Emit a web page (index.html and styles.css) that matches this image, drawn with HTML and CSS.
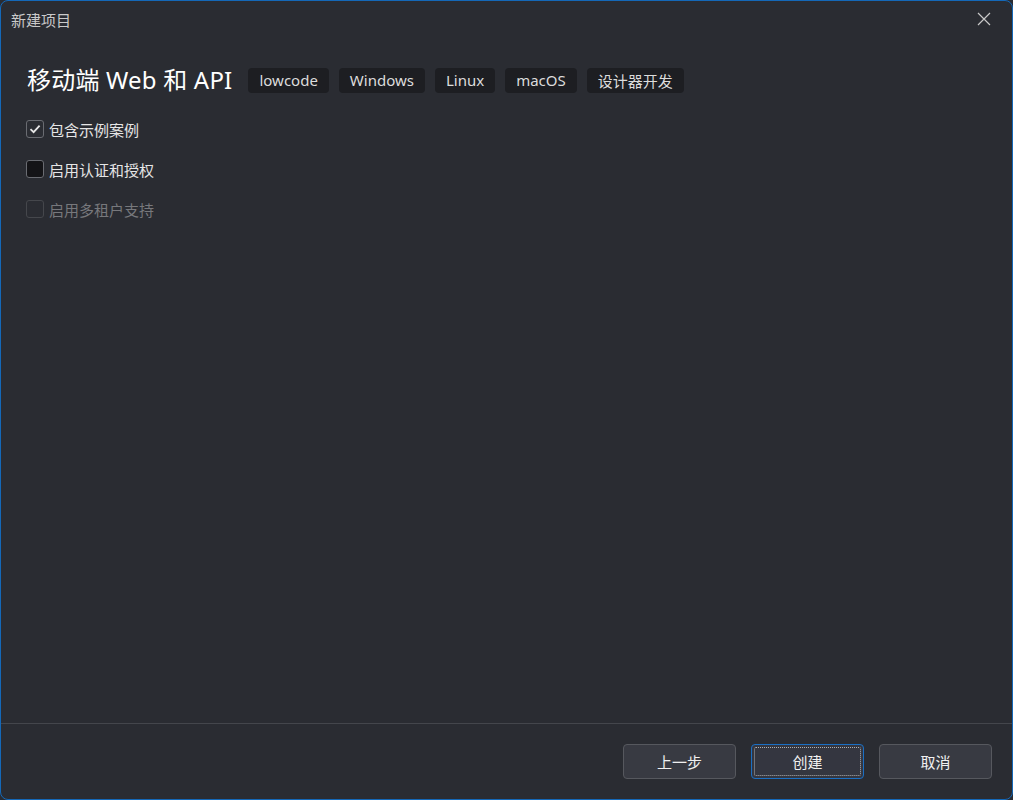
FILE: index.html
```html
<!DOCTYPE html>
<html lang="zh">
<head>
<meta charset="utf-8">
<title>新建项目</title>
<link rel="stylesheet" href="styles.css">
</head>
<body>
<div class="window">
  <div class="titlebar">
    <span class="title">新建项目</span>
    <button class="close" aria-label="关闭">
      <svg width="14" height="14" viewBox="0 0 14 14"><path d="M1 1L13 13M13 1L1 13" stroke="#c8c8c8" stroke-width="1.2" fill="none"/></svg>
    </button>
  </div>
  <div class="content">
    <div class="heading-row">
      <h1 class="heading">移动端 Web 和 API</h1>
      <div class="tags">
        <span class="tag">lowcode</span>
        <span class="tag">Windows</span>
        <span class="tag">Linux</span>
        <span class="tag">macOS</span>
        <span class="tag">设计器开发</span>
      </div>
    </div>
    <div class="options">
      <label class="option">
        <span class="box checked">
          <svg width="14" height="14" viewBox="0 0 14 14"><path d="M2.5 7.2L5.6 10.2L11.6 3.6" stroke="#e6e6e6" stroke-width="1.8" fill="none"/></svg>
        </span>
        <span>包含示例案例</span>
      </label>
      <label class="option">
        <span class="box"></span>
        <span>启用认证和授权</span>
      </label>
      <label class="option disabled">
        <span class="box"></span>
        <span>启用多租户支持</span>
      </label>
    </div>
  </div>
  <div class="footer">
    <button class="btn">上一步</button>
    <button class="btn primary"><span class="focus">创建</span></button>
    <button class="btn">取消</button>
  </div>
</div>
</body>
</html>
```
FILE: styles.css
```css
html, body {
  margin: 0;
  padding: 0;
  background: #2a2c32;
}
body {
  font-family: "Noto Sans", "Noto Sans CJK SC", sans-serif;
  color: #e8e8e8;
}
.window {
  width: 1013px;
  height: 800px;
  box-sizing: border-box;
  border: 1px solid #1468b8;
  border-radius: 8px;
  background: #2a2c32;
  display: flex;
  flex-direction: column;
  overflow: hidden;
}
.titlebar {
  height: 38px;
  display: flex;
  align-items: center;
  justify-content: space-between;
  padding-left: 10px;
  padding-right: 18px;
  flex-shrink: 0;
}
.title {
  font-family: "Noto Sans CJK SC", sans-serif;
  font-size: 15px;
  color: #c9c9c9;
  margin-top: -1px;
}
.close {
  background: none;
  border: 0;
  padding: 0;
  width: 20px;
  height: 20px;
  display: flex;
  align-items: center;
  justify-content: center;
  margin-top: -2px;
}
.content {
  flex: 1;
  padding: 20px 25px 0 25px;
}
.heading-row {
  display: flex;
  align-items: center;
  gap: 16px;
  height: 40px;
}
.heading {
  margin: 0;
  font-family: "Noto Sans", "Noto Sans CJK SC", sans-serif;
  font-weight: 400;
  font-size: 24px;
  letter-spacing: 0.2px;
  color: #ffffff;
  padding-left: 1px;
  margin-top: -2px;
}
.tags {
  display: flex;
  gap: 10px;
  margin-top: 2px;
}
.tag {
  background: #1d1e22;
  border-radius: 4px;
  height: 25px;
  padding: 0 11px;
  display: flex;
  align-items: center;
  font-size: 15px;
  color: #dcdcdc;
}
.options {
  display: flex;
  flex-direction: column;
  gap: 22px;
  margin-top: 21px;
}
.option {
  display: flex;
  align-items: center;
  gap: 5px;
  font-family: "Noto Sans CJK SC", sans-serif;
  font-size: 15px;
  color: #e6e6e6;
  height: 18px;
}
.box {
  width: 18px;
  height: 18px;
  box-sizing: border-box;
  border: 1px solid #6a6c72;
  border-radius: 3px;
  background: #141417;
  display: flex;
  align-items: center;
  justify-content: center;
}
.box.checked {
  background: #2b2d33;
}
.option.disabled {
  color: #77787c;
}
.option.disabled .box {
  background: #2a2c32;
  border-color: #45474c;
}
.footer {
  height: 76px;
  flex-shrink: 0;
  border-top: 1px solid #44464c;
  display: flex;
  align-items: flex-start;
  justify-content: flex-end;
  gap: 15px;
  padding: 20px 20px 0 0;
  box-sizing: border-box;
}
.btn {
  width: 113px;
  height: 35px;
  box-sizing: border-box;
  background: #383a42;
  border: 1px solid #56585e;
  border-radius: 4px;
  color: #f0f0f0;
  font-family: "Noto Sans CJK SC", sans-serif;
  font-size: 15px;
  padding: 0;
  display: flex;
  align-items: center;
  justify-content: center;
}
.btn.primary {
  border: 1px solid #1a6fc4;
  background: #343640;
  padding: 2px;
}
.focus {
  width: 100%;
  height: 100%;
  box-sizing: border-box;
  border: 1px dotted #b0b0b0;
  border-radius: 2px;
  display: flex;
  align-items: center;
  justify-content: center;
}
```
